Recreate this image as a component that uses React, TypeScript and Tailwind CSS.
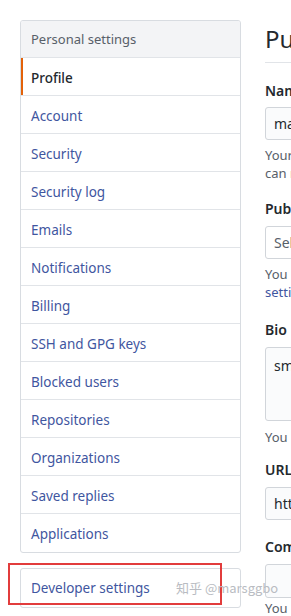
import React from "react";

const items = [
  "Account",
  "Security",
  "Security log",
  "Emails",
  "Notifications",
  "Billing",
  "SSH and GPG keys",
  "Blocked users",
  "Repositories",
  "Organizations",
  "Saved replies",
  "Applications",
];

export default function App() {
  return (
    <div
      className="relative w-[291px] h-[616px] overflow-hidden bg-white text-[14px] text-[#24292e]"
      style={{ fontFamily: '"Noto Sans", "Open Sans", sans-serif' }}
    >
      <div className="flex pt-5 pl-5">
        {/* sidebar */}
        <div className="w-[221px] shrink-0 flex flex-col">
          <div className="border border-[#d8dce1] rounded-[3px] overflow-hidden">
            <div className="h-[37px] flex items-center pl-[10px] pt-[2px] bg-[#f3f4f6] text-[#586069] text-[13px] border-b border-[#e1e4e8]">
              Personal settings
            </div>
            <div className="h-[38px] flex items-center pl-[10px] pt-[3px] border-b border-[#e1e4e8] relative text-[13.5px] text-[#24292e] font-medium">
              <div className="absolute left-0 top-0 bottom-0 w-[2px] bg-[#e36209]" />
              Profile
            </div>
            {items.map((t, i) => (
              <div
                key={t}
                className={
                  "h-[38px] flex items-center pl-[10px] pt-[3px] text-[13.5px] text-[#3f56a0] " +
                  (i < items.length - 1 ? "border-b border-[#e1e4e8]" : "")
                }
              >
                {t}
              </div>
            ))}
          </div>
          <div className="mt-[15px] border border-[#d8dce1] rounded-[3px] h-[40px] flex items-center pl-[10px] text-[13.5px] text-[#3f56a0]">
            Developer settings
          </div>
        </div>
        {/* main */}
        <div className="ml-[24px] w-[200px] shrink-0 flex flex-col">
          <div className="text-[24px] leading-[30px] pt-[4px] pb-[8px] border-b border-[#e1e4e8] whitespace-nowrap">
            Public profile
          </div>
          <div className="mt-[18px] font-semibold leading-[20px]">Name</div>
          <div className="mt-[6px] h-[33px] border border-[#d1d5da] rounded-[3px] bg-[#fafbfc] flex items-center pl-[8px]">
            marsggbo
          </div>
          <div className="mt-[6px] text-[13px] leading-[18px] text-[#586069] whitespace-nowrap">
            <div>Your name may appear around</div>
            <div>can remove it at any time.</div>
          </div>
          <div className="mt-[17px] font-semibold leading-[20px]">Public email</div>
          <div className="mt-[7px] h-[33px] border border-[#d1d5da] rounded-[3px] bg-white flex items-center pl-[8px] text-[#586069]">
            Select a verified email
          </div>
          <div className="mt-[6px] text-[13px] leading-[18px] text-[#586069] whitespace-nowrap">
            <div>
              You <span className="text-[#a0522d]">have set your email</span>
            </div>
            <div className="text-[#3f56a0]">settings</div>
          </div>
          <div className="mt-[19px] font-semibold leading-[20px]">Bio</div>
          <div className="mt-[7px] h-[74px] border border-[#d1d5da] rounded-[3px] bg-[#fafbfc] pl-[8px] pt-[7px]">
            smile
          </div>
          <div className="mt-[7px] text-[13px] leading-[18px] text-[#586069] whitespace-nowrap">
            You can @mention other users
          </div>
          <div className="mt-[14px] font-semibold leading-[20px]">URL</div>
          <div className="mt-[7px] h-[33px] border border-[#d1d5da] rounded-[3px] bg-[#fafbfc] flex items-center pl-[8px]">
            https://
          </div>
          <div className="mt-[17px] font-semibold leading-[20px]">Company</div>
          <div className="mt-[7px] h-[34px] border border-[#d1d5da] rounded-[3px] bg-[#fafbfc]" />
          <div className="mt-[1px] text-[13px] leading-[18px] text-[#586069] whitespace-nowrap">
            You can @mention
          </div>
        </div>
      </div>
      {/* red highlight */}
      <div className="absolute left-[8px] top-[563px] w-[214px] h-[42px] border-[2px] border-[#e23c3c]" />
      {/* watermark */}
      <div
        className="absolute left-[176px] top-[578px] text-[13px] text-[#b9bcc2] whitespace-nowrap"
        style={{ fontFamily: '"Noto Sans CJK SC", sans-serif' }}
      >
        知乎 @marsggbo
      </div>
    </div>
  );
}
